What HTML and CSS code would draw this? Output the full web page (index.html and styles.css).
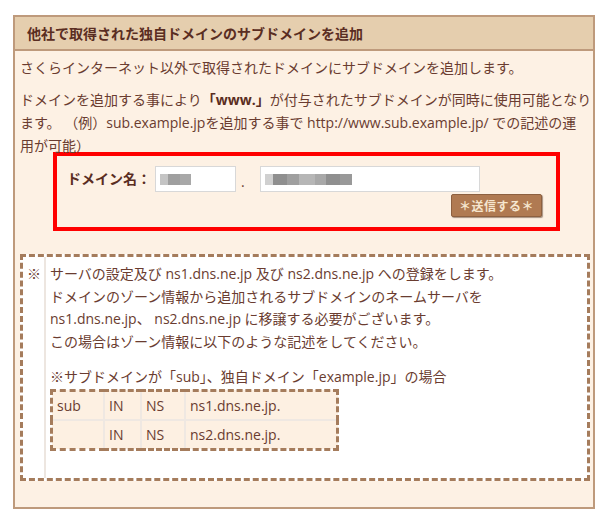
FILE: index.html
```html
<!DOCTYPE html>
<html lang="ja">
<head>
<meta charset="utf-8">
<link rel="stylesheet" href="styles.css">
</head>
<body>
<div class="panel">
  <h2 class="panel-head">他社で取得された独自ドメインのサブドメインを追加</h2>
  <div class="panel-body">
    <p class="lead">さくらインターネット以外で取得されたドメインにサブドメインを追加します。</p>
    <p class="desc">ドメインを追加する事により<b class="www">「www.」</b>が付与されたサブドメインが同時に使用可能となり<br>ます。 （例）sub.example.jpを追加する事で http://www.sub.example.jp/ での記述の運<br>用が可能）</p>
    <form class="domain-form">
      <div class="form-row">
        <label class="form-label">ドメイン名：</label>
        <span class="input input-sub"><span class="blur b1"></span><span class="blur b2"></span><span class="blur b3"></span></span>
        <span class="dot">.</span>
        <span class="input input-domain"><span class="blur b4"></span><span class="blur b5"></span><span class="blur b2"></span><span class="blur b6"></span><span class="blur b3"></span><span class="blur b5"></span><span class="blur b7"></span></span>
      </div>
      <div class="form-actions">
        <button type="button" class="submit">＊送信する＊</button>
      </div>
    </form>
    <div class="note">
      <div class="note-mark">※</div>
      <div class="note-body">
        <p class="note-text">サーバの設定及び ns1.dns.ne.jp 及び ns2.dns.ne.jp への登録をします。<br>ドメインのゾーン情報から追加されるサブドメインのネームサーバを<br>ns1.dns.ne.jp、 ns2.dns.ne.jp に移譲する必要がございます。<br>この場合はゾーン情報に以下のような記述をしてください。</p>
        <p class="note-example">※サブドメインが「sub」、独自ドメイン「example.jp」の場合</p>
        <table class="zone">
          <tr><td class="c1">sub</td><td class="c2">IN</td><td class="c3">NS</td><td class="c4">ns1.dns.ne.jp.</td></tr>
          <tr><td class="c1"></td><td class="c2">IN</td><td class="c3">NS</td><td class="c4">ns2.dns.ne.jp.</td></tr>
        </table>
      </div>
    </div>
  </div>
</div>
</body>
</html>
```

FILE: styles.css
```css
html, body {
  margin: 0;
  padding: 0;
  background: #ffffff;
}
body {
  font-family: "Open Sans", "Noto Sans CJK JP", sans-serif;
  font-size: 14px;
  color: #6a3c30;
}
.panel {
  margin: 15px 0 0 13px;
  width: 578px;
  border: 2px solid #be9a7c;
  background: #fdf1e4;
}
.panel-head {
  margin: 0;
  height: 32px;
  line-height: 32px;
  padding: 0 0 0 12px;
  font-size: 14px;
  font-weight: bold;
  color: #5a2d22;
  background: #e5ceae;
  border-bottom: 2px solid #be9a7c;
  font-family: "Noto Sans CJK JP", sans-serif;
}
.panel-body {
  padding: 5px 3px 26px 5px;
}
.lead, .desc {
  margin: 0;
  line-height: 23px;
  white-space: nowrap;
}
.desc {
  margin-top: 9px;
}
.www {
  color: #5a2d22;
}
.domain-form {
  margin: -5px 30px 0 33px;
  border: 4px solid #ff0000;
  padding: 10px;
}
.form-row {
  display: flex;
  align-items: center;
}
.form-label {
  font-weight: bold;
  color: #5a2d22;
  width: 88px;
  line-height: 20px;
}
.input {
  display: flex;
  align-items: center;
  box-sizing: border-box;
  height: 26px;
  border: 1px solid #d8d8d8;
  background: #ffffff;
  padding-left: 4px;
}
.input-sub {
  width: 81px;
}
.input-domain {
  width: 220px;
}
.dot {
  width: 24px;
  padding-left: 5px;
  box-sizing: border-box;
  line-height: 20px;
  align-self: flex-end;
}
.blur {
  display: inline-block;
  height: 11px;
  width: 10px;
}
.b1 { background: #c4c4c4; width: 8px; }
.b2 { background: #9f9f9f; width: 12px; }
.b3 { background: #a8a8a8; width: 11px; }
.b4 { background: #d0d0d0; width: 8px; }
.b5 { background: #8f8f8f; width: 14px; }
.b6 { background: #b6b6b6; width: 16px; }
.b7 { background: #999999; width: 12px; }
.form-actions {
  display: flex;
  justify-content: flex-end;
  margin-top: 2px;
  padding-right: 4px;
}
.submit {
  width: 91px;
  height: 23px;
  padding: 0;
  border: 1px solid #8d6040;
  border-radius: 2px;
  background: #b07a52;
  color: #f6e6cf;
  font-family: "Noto Sans CJK JP", sans-serif;
  font-size: 12px;
  font-weight: bold;
  letter-spacing: 0.5px;
  line-height: 20px;
  box-shadow: 1px 1px 1px rgba(80, 50, 30, 0.5);
}
.note {
  display: flex;
  margin: 23px 0 0 0;
  border: 3px dashed #a57c5c;
  background: #ffffff;
}
.note-mark {
  width: 17px;
  padding: 6px 0 0 4px;
  line-height: 22.5px;
  border-right: 2px solid #ede6e0;
}
.note-body {
  flex: 1;
  padding: 6px 0 27px 4px;
}
.note-text {
  margin: 0;
  line-height: 22.5px;
}
.note-example {
  margin: 13px 0 0 0;
  line-height: 22.5px;
}
.zone {
  border-collapse: collapse;
  border: 3px dashed #a57c5c;
  width: 289px;
}
.zone td {
  background: #fdf0e2;
  border: 2px solid #efe8e2;
  height: 27px;
  padding: 0 0 0 4px;
  line-height: 27px;
}
.zone tr:first-child td { border-top: none; }
.zone tr:last-child td { border-bottom: none; }
.zone td.c1 { border-left: none; width: 46px; }
.zone td.c4 { border-right: none; }
.c2 { width: 31px; }
.c3 { width: 38px; }
```
